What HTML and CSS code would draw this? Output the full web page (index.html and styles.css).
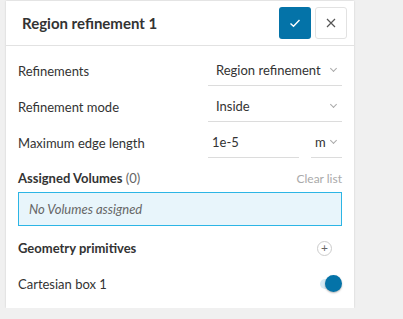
FILE: index.html
```html
<!DOCTYPE html>
<html lang="en">
<head>
  <meta charset="UTF-8">
  <title>Region refinement 1</title>
  <link rel="stylesheet" href="styles.css">
</head>
<body>
  <div class="panel">
    <div class="header">
      <h2>Region refinement 1</h2>
      <button class="btn-ok">
        <svg width="14" height="14" viewBox="0 0 14 14"><path d="M2.5 7.5 L5.5 10.2 L11.5 4" fill="none" stroke="white" stroke-width="1.4"/></svg>
      </button>
      <button class="btn-close">
        <svg width="12" height="12" viewBox="0 0 12 12"><path d="M2 2 L10 10 M10 2 L2 10" fill="none" stroke="#555" stroke-width="1.2"/></svg>
      </button>
    </div>

    <div class="body">
      <div class="row">
        <span class="label">Refinements</span>
        <div class="select">Region refinement <span class="chev"></span></div>
      </div>
      <div class="row">
        <span class="label">Refinement mode</span>
        <div class="select">Inside <span class="chev"></span></div>
      </div>
      <div class="row">
        <span class="label">Maximum edge length</span>
        <div class="field">
          <div class="input">1e-5</div>
          <div class="unit">m <span class="chev"></span></div>
        </div>
      </div>

      <div class="section">
        <span class="title">Assigned Volumes <span class="count">(0)</span></span>
        <span class="clear">Clear list</span>
      </div>
      <div class="volumes">No Volumes assigned</div>

      <div class="section primitives">
        <span class="title">Geometry primitives</span>
        <span class="plus">+</span>
      </div>
      <div class="item">
        <span>Cartesian box 1</span>
        <span class="toggle"><span class="knob"></span></span>
      </div>
    </div>
  </div>
</body>
</html>
```

FILE: styles.css
```css
* {
  margin: 0;
  padding: 0;
  box-sizing: border-box;
}
body {
  font-family: Lato, 'Noto Sans', sans-serif;
  background-color: #f0f0f0;
  color: #333;
  font-size: 13px;
}
.panel {
  width: 348px;
  height: 307px;
  margin: 1px 0 0 6px;
  background-color: white;
  box-shadow: 0 0 2px rgba(0, 0, 0, 0.15);
}
.header {
  height: 45px;
  display: flex;
  align-items: center;
  gap: 4px;
  padding: 0 7px 0 16px;
  border-bottom: 1px solid #e2e2e2;
}
.header h2 {
  flex: 1;
  font-size: 15px;
  font-weight: bold;
  color: #333;
}
.header button {
  width: 32px;
  height: 32px;
  border-radius: 3px;
  display: flex;
  justify-content: center;
  align-items: center;
}
.btn-ok {
  background-color: #0473a8;
  border: none;
}
.btn-close {
  background-color: white;
  border: 1px solid #e2e2e2;
}
.body {
  padding: 9px 12px 0 12px;
}
.row {
  display: flex;
  align-items: center;
  height: 31px;
  margin-bottom: 5px;
}
.label {
  flex: 1;
}
.select, .input, .unit {
  height: 31px;
  display: flex;
  align-items: center;
  border-bottom: 1px solid #dcdcdc;
}
.select {
  width: 134px;
  padding-left: 8px;
  position: relative;
}
.field {
  width: 134px;
  display: flex;
  gap: 12px;
}
.input {
  width: 91px;
  padding-left: 4px;
}
.unit {
  width: 31px;
  padding-left: 4px;
  position: relative;
}
.chev {
  position: absolute;
  right: 6px;
  top: 11px;
  width: 5px;
  height: 5px;
  border-right: 1px solid #aaa;
  border-bottom: 1px solid #aaa;
  transform: rotate(45deg);
}
.section {
  display: flex;
  justify-content: space-between;
  align-items: center;
  height: 20px;
  margin-top: 10px;
}
.title {
  font-weight: bold;
}
.count {
  font-weight: normal;
  color: #666;
}
.clear {
  font-size: 12px;
  color: #aaa;
}
.volumes {
  height: 34px;
  margin-top: 4px;
  padding-left: 10px;
  display: flex;
  align-items: center;
  background-color: #e8f5fb;
  border: 1px solid #2cb5e5;
  font-style: italic;
  color: #666;
}
.primitives {
  margin-top: 12px;
}
.plus {
  width: 15px;
  height: 15px;
  margin-right: 10px;
  border: 1px solid #ccc;
  border-radius: 50%;
  display: flex;
  justify-content: center;
  align-items: center;
  font-size: 12px;
  line-height: 1;
  color: #666;
}
.item {
  display: flex;
  justify-content: space-between;
  align-items: center;
  height: 20px;
  margin-top: 16px;
}
.toggle {
  position: relative;
  width: 18px;
  height: 10px;
  margin-right: 4px;
  border-radius: 5px;
  background-color: #d5eaf5;
}
.knob {
  position: absolute;
  right: -4px;
  top: -4px;
  width: 17px;
  height: 17px;
  border-radius: 50%;
  background-color: #0473a8;
  box-shadow: 0 1px 2px rgba(0, 0, 0, 0.3);
}
```
